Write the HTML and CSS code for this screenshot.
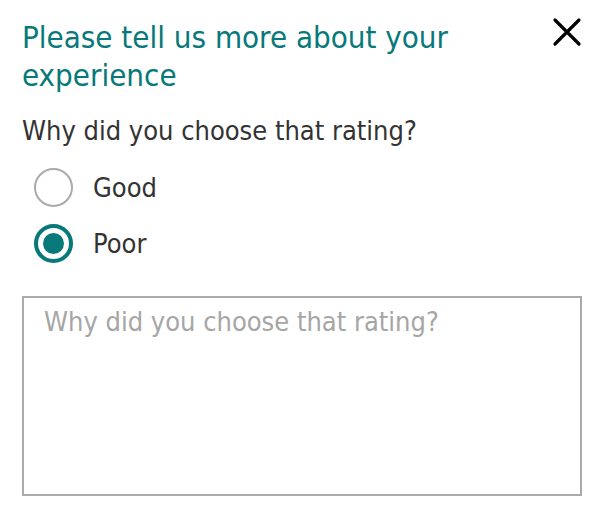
FILE: index.html
```html
<!DOCTYPE html>
<html lang="en">
<head>
    <meta charset="UTF-8">
    <title>Feedback</title>
    <link rel="stylesheet" href="styles.css">
</head>
<body>
    <div class="feedback">
        <!-- Header -->
        <div class="feedback-header">
            <h1>Please tell us more about your experience</h1>
            <button class="close-button" aria-label="Close">
                <svg width="30" height="30" viewBox="0 0 30 30">
                    <path d="M3 3 L27 27 M27 3 L3 27" stroke="#000" stroke-width="3.2" stroke-linecap="round"/>
                </svg>
            </button>
        </div>

        <p class="question">Why did you choose that rating?</p>

        <div class="options">
            <label class="option">
                <input type="radio" name="rating" value="good">
                <span class="radio"></span>
                Good
            </label>
            <label class="option">
                <input type="radio" name="rating" value="poor" checked>
                <span class="radio"></span>
                Poor
            </label>
        </div>

        <textarea class="comment" placeholder="Why did you choose that rating?"></textarea>
    </div>
</body>
</html>
```

FILE: styles.css
```css
body {
    margin: 0;
    background-color: #fff;
    font-family: "DejaVu Sans Condensed", "DejaVu Sans", sans-serif;
}
.feedback {
    padding: 18px 26px 0 22px;
}
.feedback-header {
    display: flex;
    justify-content: space-between;
    align-items: flex-start;
}
.feedback-header h1 {
    margin: 0;
    width: 450px;
    font-size: 31px;
    font-weight: normal;
    line-height: 38px;
    color: #07797a;
}
.close-button {
    border: none;
    background: none;
    padding: 0;
    margin-top: -1px;
    cursor: pointer;
}
.close-button svg {
    display: block;
}
.question {
    margin: 21px 0 0;
    font-size: 27px;
    line-height: 32px;
    color: #333;
}
.options {
    display: flex;
    flex-direction: column;
    gap: 17px;
    margin-top: 21px;
    padding-left: 12px;
}
.option {
    display: flex;
    align-items: center;
    gap: 20px;
    font-size: 27px;
    color: #333;
    cursor: pointer;
}
.option input {
    display: none;
}
.radio {
    width: 35px;
    height: 35px;
    border: 2px solid #aaa;
    border-radius: 50%;
    position: relative;
}
.option input:checked + .radio {
    border: 4px solid #07797a;
    width: 31px;
    height: 31px;
}
.option input:checked + .radio::after {
    content: "";
    position: absolute;
    top: 5px;
    left: 5px;
    width: 21px;
    height: 21px;
    border-radius: 50%;
    background-color: #07797a;
}
.comment {
    display: block;
    width: 560px;
    height: 200px;
    margin-top: 33px;
    padding: 8px 20px;
    box-sizing: border-box;
    border: 2px solid #aaa;
    font-family: inherit;
    font-size: 27px;
    line-height: 32px;
    color: #333;
    resize: none;
}
.comment::placeholder {
    color: #a6a6a6;
}
```
